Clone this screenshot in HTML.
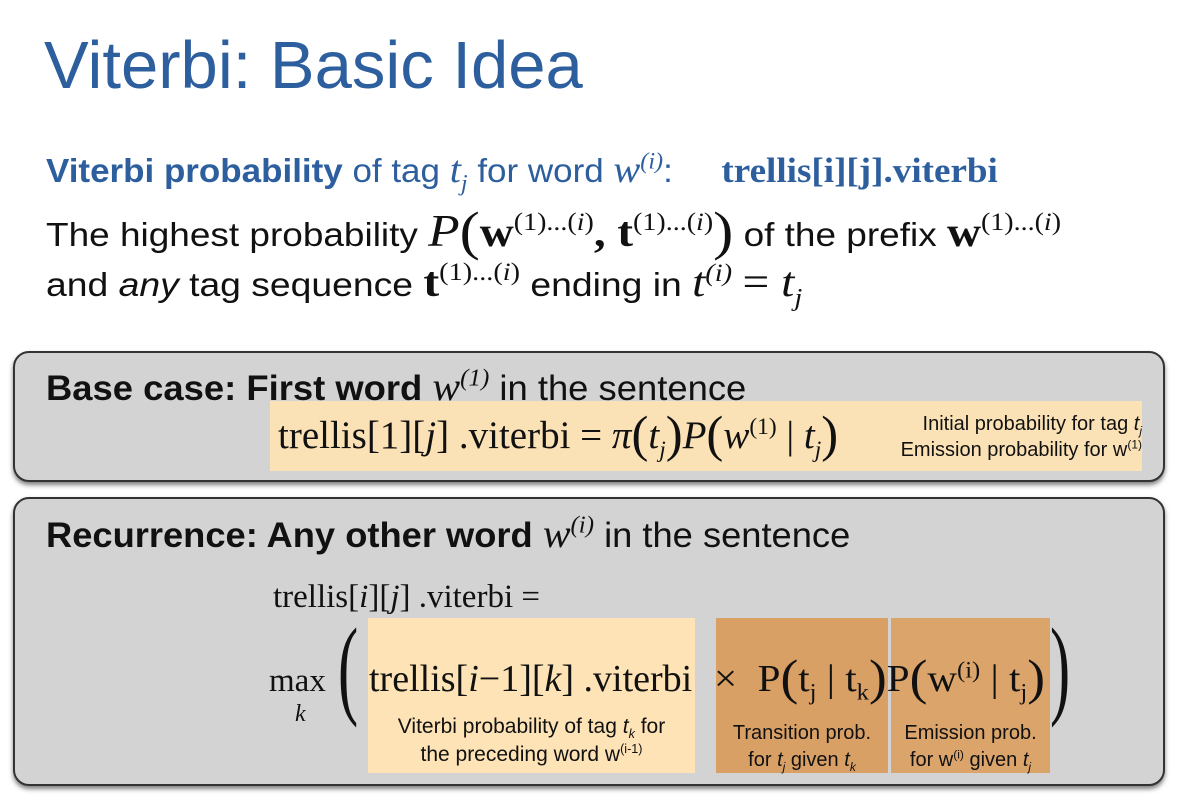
<!DOCTYPE html>
<html><head><meta charset="utf-8"><style>
body{margin:0;width:1179px;height:804px;background:#fff;position:relative;overflow:hidden;font-family:"Liberation Sans",sans-serif;color:#111}
.a{position:absolute;white-space:nowrap;line-height:1.2;transform-origin:left center}
.s{font-family:"Liberation Serif",serif}
.i{font-style:italic}
.box{position:absolute;border:2px solid #333;border-radius:16px;background:#d3d3d3;box-shadow:0 3px 5px rgba(0,0,0,.5)}
sup,sub{font-size:60%;line-height:0}
.p{font-size:130%;vertical-align:-3px;line-height:0}
</style></head><body>
<div class="a" style="left:44px;top:26px;font-size:67px;color:#2d5f9e">Viterbi: Basic Idea</div>
<div class="a" style="left:46px;top:148px;font-size:33px;color:#2d5f9e;transform:scaleX(1.06)"><b>Viterbi probability</b> of tag <span class="s i" style="font-size:38px">t<sub>j</sub></span> for word <span class="s i" style="font-size:38px">w<sup>(i)</sup></span>: &nbsp;&nbsp;&nbsp;&nbsp;<b class="s" style="font-size:35px">trellis[i][j].viterbi</b></div>
<div class="a" style="left:46px;top:203px;font-size:33px;transform:scaleX(1.12)">The highest probability <span class="s i" style="font-size:46px">P</span><span class="s p" style="font-size:54px">(</span><b class="s" style="font-size:42px">w</b><span class="s" style="font-size:25px;vertical-align:16px">(1)...(<i>i</i>)</span><b class="s" style="font-size:42px">, t</b><span class="s" style="font-size:25px;vertical-align:16px">(1)...(<i>i</i>)</span><span class="s p" style="font-size:54px">)</span> of the prefix <b class="s" style="font-size:42px">w</b><span class="s" style="font-size:25px;vertical-align:16px">(1)...(<i>i</i>)</span></div>
<div class="a" style="left:46px;top:258px;font-size:33px;transform:scaleX(1.13)">and <i>any</i> tag sequence <b class="s" style="font-size:42px">t</b><span class="s" style="font-size:25px;vertical-align:16px">(1)...(<i>i</i>)</span> ending in <span class="s i" style="font-size:42px">t<sup>(i)</sup></span> <span class="s" style="font-size:42px">= <i>t<sub>j</sub></i></span></div>

<div class="box" style="left:13px;top:351px;width:1148px;height:127px"></div>
<div class="a" style="left:270px;top:401px;width:872px;height:70px;background:#fbe2b6"></div>
<div class="a" style="left:46px;top:363px;font-size:35px;transform:scaleX(1.04)"><b>Base case: First word</b> <span class="s i" style="font-size:40px">w<sup>(1)</sup></span> in the sentence</div>
<div class="a s" style="left:278px;top:413px;font-size:39px">trellis[1][<i>j</i>] .viterbi = <i>π</i><span class="p">(</span><i>t<sub>j</sub></i><span class="p">)</span><i>P</i><span class="p">(</span><i>w</i><sup>(1)</sup> | <i>t<sub>j</sub></i><span class="p">)</span></div>
<div class="a" style="left:840px;top:411px;font-size:20px;text-align:right;width:302px;line-height:26px">Initial probability for tag <i>t<sub>j</sub></i><br>Emission probability for w<sup>(1)</sup></div>

<div class="box" style="left:13px;top:497px;width:1148px;height:285px"></div>
<div class="a" style="left:46px;top:510px;font-size:35px;transform:scaleX(1.037)"><b>Recurrence: Any other word</b> <span class="s i" style="font-size:40px">w<sup>(i)</sup></span> in the sentence</div>
<div class="a s" style="left:273px;top:578px;font-size:33px">trellis[<i>i</i>][<i>j</i>] .viterbi =</div>
<div class="a" style="left:368px;top:618px;width:327px;height:155px;background:#fde3b5"></div>
<div class="a" style="left:716px;top:618px;width:172px;height:155px;background:#d9a066"></div>
<div class="a" style="left:891px;top:618px;width:159px;height:155px;background:#dba46b"></div>
<div class="a s" style="left:269px;top:662px;font-size:33px">max</div>
<div class="a s i" style="left:295px;top:700px;font-size:24px">k</div>
<div class="a s" style="left:338px;top:612px;font-size:110px;line-height:1;transform:scaleX(.55)">(</div>
<div class="a s" style="left:1050px;top:612px;font-size:110px;line-height:1;transform:scaleX(.55)">)</div>
<div class="a s" style="left:369px;top:657px;font-size:38px">trellis[<i>i</i>−1][<i>k</i>] .viterbi</div>
<div class="a s" style="left:714px;top:657px;font-size:38px;transform:scaleX(1.08)">× &nbsp;P<span class="p">(</span>t<sub>j</sub> | t<sub>k</sub><span class="p">)</span>P<span class="p">(</span>w<sup>(i)</sup> | t<sub>j</sub><span class="p">)</span></div>
<div class="a" style="left:360px;top:713px;width:343px;text-align:center;font-size:21px;line-height:28px">Viterbi probability of tag <i>t<sub>k</sub></i> for<br>the preceding word w<sup>(i-1)</sup></div>
<div class="a" style="left:706px;top:720px;width:192px;text-align:center;font-size:20px;line-height:27px">Transition prob.<br>for <i>t<sub>j</sub></i> given <i>t<sub>k</sub></i></div>
<div class="a" style="left:881px;top:720px;width:179px;text-align:center;font-size:20px;line-height:27px">Emission prob.<br>for w<sup>(i)</sup> given <i>t<sub>j</sub></i></div>
</body></html>
